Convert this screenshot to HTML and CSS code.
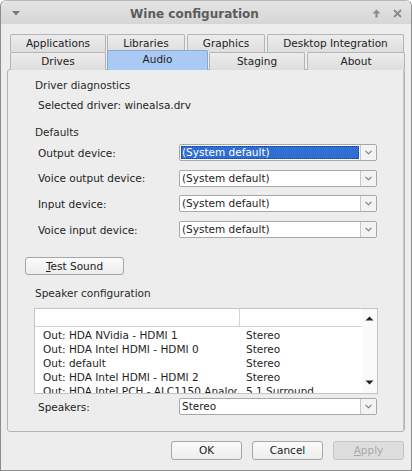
FILE: index.html
```html
<!DOCTYPE html>
<html>
<head>
<meta charset="utf-8">
<link rel="stylesheet" href="styles.css">
</head>
<body>
<div class="window">
  <div class="titlebar">
    <svg class="tb-menu" width="8" height="5" viewBox="0 0 8 5"><path d="M0 0H8L4 4.5Z" fill="#7a7a7a"/></svg>
    <div class="title">Wine configuration</div>
    <div class="tb-right">
      <svg width="9" height="9" viewBox="0 0 9 9"><path d="M4.5 0.5L8.5 4.5H5.6V8.5H3.4V4.5H0.5Z" fill="#8a8a8a"/></svg>
      <svg width="9" height="9" viewBox="0 0 9 9"><path d="M1 1L8 8M8 1L1 8" stroke="#8a8a8a" stroke-width="1.8"/></svg>
    </div>
  </div>
  <div class="body">
    <div class="tabs">
      <div class="tabrow back">
        <div class="tab w-app">Applications</div>
        <div class="tab w-lib">Libraries</div>
        <div class="tab w-gfx">Graphics</div>
        <div class="tab w-desk">Desktop Integration</div>
      </div>
      <div class="tabrow front">
        <div class="tab w-drv">Drives</div>
        <div class="tab w-aud active">Audio</div>
        <div class="tab w-stg">Staging</div>
        <div class="tab w-abt">About</div>
      </div>
    </div>
    <div class="panel">
      <div class="group-title first">Driver diagnostics</div>
      <div class="line-text">Selected driver: winealsa.drv</div>
      <div class="group-title defaults">Defaults</div>
      <div class="devices">
        <div class="lbl">Output device:</div>
        <div class="combo selected"><div class="combo-text"><span>(System default)</span></div><div class="combo-btn"><svg width="7" height="5" viewBox="0 0 7 5"><path d="M0.5 0.8L3.5 3.8L6.5 0.8" fill="none" stroke="#777" stroke-width="1.1"/></svg></div></div>
        <div class="lbl">Voice output device:</div>
        <div class="combo"><div class="combo-text"><span>(System default)</span></div><div class="combo-btn"><svg width="7" height="5" viewBox="0 0 7 5"><path d="M0.5 0.8L3.5 3.8L6.5 0.8" fill="none" stroke="#777" stroke-width="1.1"/></svg></div></div>
        <div class="lbl">Input device:</div>
        <div class="combo"><div class="combo-text"><span>(System default)</span></div><div class="combo-btn"><svg width="7" height="5" viewBox="0 0 7 5"><path d="M0.5 0.8L3.5 3.8L6.5 0.8" fill="none" stroke="#777" stroke-width="1.1"/></svg></div></div>
        <div class="lbl">Voice input device:</div>
        <div class="combo"><div class="combo-text"><span>(System default)</span></div><div class="combo-btn"><svg width="7" height="5" viewBox="0 0 7 5"><path d="M0.5 0.8L3.5 3.8L6.5 0.8" fill="none" stroke="#777" stroke-width="1.1"/></svg></div></div>
      </div>
      <div class="btn test"><span class="ul">T</span>est Sound</div>
      <div class="group-title spk">Speaker configuration</div>
      <div class="list">
        <div class="list-main">
          <div class="list-head"><div class="hc1"></div><div class="hc2"></div></div>
          <div class="list-rows">
            <div class="lrow"><span class="c1">Out: HDA NVidia - HDMI 1</span><span class="c2">Stereo</span></div>
            <div class="lrow"><span class="c1">Out: HDA Intel HDMI - HDMI 0</span><span class="c2">Stereo</span></div>
            <div class="lrow"><span class="c1">Out: default</span><span class="c2">Stereo</span></div>
            <div class="lrow"><span class="c1">Out: HDA Intel HDMI - HDMI 2</span><span class="c2">Stereo</span></div>
            <div class="lrow"><span class="c1">Out: HDA Intel PCH - ALC1150 Analog</span><span class="c2">5.1 Surround</span></div>
          </div>
        </div>
        <div class="scroll">
          <svg width="9" height="5" viewBox="0 0 9 5"><path d="M0.5 4.5L4.5 0.5L8.5 4.5Z" fill="#222"/></svg>
          <svg width="9" height="5" viewBox="0 0 9 5"><path d="M0.5 0.5L4.5 4.5L8.5 0.5Z" fill="#222"/></svg>
        </div>
      </div>
      <div class="speakers">
        <div class="lbl">Speakers:</div>
        <div class="combo"><div class="combo-text"><span>Stereo</span></div><div class="combo-btn"><svg width="7" height="5" viewBox="0 0 7 5"><path d="M0.5 0.8L3.5 3.8L6.5 0.8" fill="none" stroke="#777" stroke-width="1.1"/></svg></div></div>
      </div>
    </div>
    <div class="buttons">
      <div class="btn dlg">OK</div>
      <div class="btn dlg">Cancel</div>
      <div class="btn dlg disabled"><span class="ul">A</span>pply</div>
    </div>
  </div>
</div>
</body>
</html>
```
FILE: styles.css
```css
* { box-sizing: border-box; }
html, body { margin: 0; padding: 0; }
body {
  background: #ffffff;
  font-family: "DejaVu Sans", Verdana, sans-serif;
  font-size: 10.5px;
  color: #1e1e1e;
}
.window {
  width: 412px;
  height: 471px;
  border: 1px solid #8c8c8c;
  border-top-color: #b8b8b8;
  border-radius: 6px 6px 0 0;
  background: #ededed;
  display: flex;
  flex-direction: column;
  overflow: hidden;
}
.titlebar {
  height: 23px;
  flex: none;
  background: linear-gradient(#e4e4e4, #d6d6d6);
  display: flex;
  align-items: center;
  padding: 0 9px 0 11px;
}
.tb-menu { flex: none; margin-top: 1px; }
.title {
  flex: 1;
  text-align: center;
  font-weight: bold;
  font-size: 12px;
  color: #5c5c5c;
  padding-right: 3px;
  margin-top: 2px;
}
.tb-right { display: flex; gap: 12px; align-items: center; margin-top: 2px; }
.body {
  flex: 1;
  display: flex;
  flex-direction: column;
  padding: 10px 0 0 6px;
}
.tabs { margin-left: 3px; height: 36px; position: relative; z-index: 1; }
.tabrow { display: flex; height: 18px; }
.tab {
  height: 18px;
  border: 1px solid #b4b4b4;
  border-bottom: none;
  border-radius: 2px 2px 0 0;
  background: linear-gradient(#ececec, #dedede);
  text-align: center;
  line-height: 17px;
  font-size: 10.5px;
  color: #222;
}
.back .tab { margin-right: 2px; }
.front .tab { margin-right: 1px; }
.w-app { width: 96px; margin-right: 1px !important; }
.w-lib { width: 78px; }
.w-gfx { width: 78px; }
.w-desk { width: 137px; }
.w-drv { width: 96px; }
.w-aud { width: 101px; }
.w-stg { width: 96px; margin-right: 2px !important; }
.w-abt { width: 98px; }
.tab.active {
  height: 20px;
  margin-top: -2px;
  background: #aacaf4;
  border-color: #86a8d4;
  line-height: 17px;
}
.panel {
  margin-top: -1px;
  width: 398px;
  height: 363px;
  border: 1px solid #b4b4b4;
  border-radius: 3px;
  box-shadow: inset -5px 0 0 -4px #c4c4c4;
  padding: 0 0 0 27px;
  display: flex;
  flex-direction: column;
  line-height: 14px;
}
.group-title { color: #2a2a2a; }
.group-title.first { margin-top: 8px; }
.line-text { margin-top: 6px; padding-left: 3px; }
.group-title.defaults { margin-top: 13px; }
.devices {
  margin-top: 5px;
  display: grid;
  grid-template-columns: 141px 198px;
  grid-auto-rows: 17px;
  row-gap: 8.7px;
  align-items: center;
  padding-left: 3px;
}
.lbl { line-height: 14px; }
.combo {
  height: 17px;
  display: flex;
  border: 1px solid #a8a8a8;
  border-radius: 2px;
  background: #fff;
}
.combo-text {
  flex: 1;
  padding: 1px;
  display: flex;
}
.combo-text span { flex: 1; padding-left: 1px; line-height: 13px; }
.combo.selected .combo-text span {
  background: #2f6fd3;
  color: #fff;
  outline: 1px dotted #1a3f80;
  outline-offset: -1px;
}
.combo-btn {
  width: 16px;
  border-left: 1px solid #c8c8c8;
  background: #f3f3f3;
  display: flex;
  align-items: center;
  justify-content: center;
}
.btn {
  border: 1px solid #a6a6a6;
  border-radius: 3px;
  background: linear-gradient(#fbfbfb, #ececec);
  text-align: center;
  color: #222;
}
.ul { text-decoration: underline; }
.btn.test {
  margin-top: 19px;
  margin-left: -10px;
  width: 99px;
  height: 18px;
  line-height: 16px;
}
.group-title.spk { margin-top: 11px; }
.list {
  margin-top: 8px;
  margin-left: -1px;
  width: 344px;
  height: 86px;
  border: 1px solid #c4c4c4;
  background: #fff;
  display: flex;
  overflow: hidden;
}
.list-main { flex: 1; display: flex; flex-direction: column; overflow: hidden; }
.list-head { height: 18px; flex: none; display: flex; border-bottom: 1px solid #d4d4d4; }
.hc1 { width: 205px; border-right: 1px solid #d4d4d4; }
.hc2 { flex: 1; }
.list-rows { padding-top: 1px; }
.lrow { display: flex; height: 14px; line-height: 14px; white-space: nowrap; }
.c1 { width: 202px; padding-left: 8px; overflow: hidden; }
.c2 { padding-left: 9px; }
.scroll {
  width: 15px;
  flex: none;
  background: #fafafa;
  display: flex;
  flex-direction: column;
  justify-content: space-between;
  align-items: center;
  padding: 7px 0 8px;
}
.speakers {
  margin-top: 4px;
  display: grid;
  grid-template-columns: 141px 198px;
  align-items: center;
  padding-left: 3px;
}
.buttons {
  display: flex;
  justify-content: flex-end;
  gap: 10px;
  padding: 9px 7px 0 0;
}
.btn.dlg {
  width: 71px;
  height: 19px;
  line-height: 17px;
}
.btn.disabled {
  background: #dedede;
  border-color: #c4c4c4;
  color: #a8a8a8;
}
```
